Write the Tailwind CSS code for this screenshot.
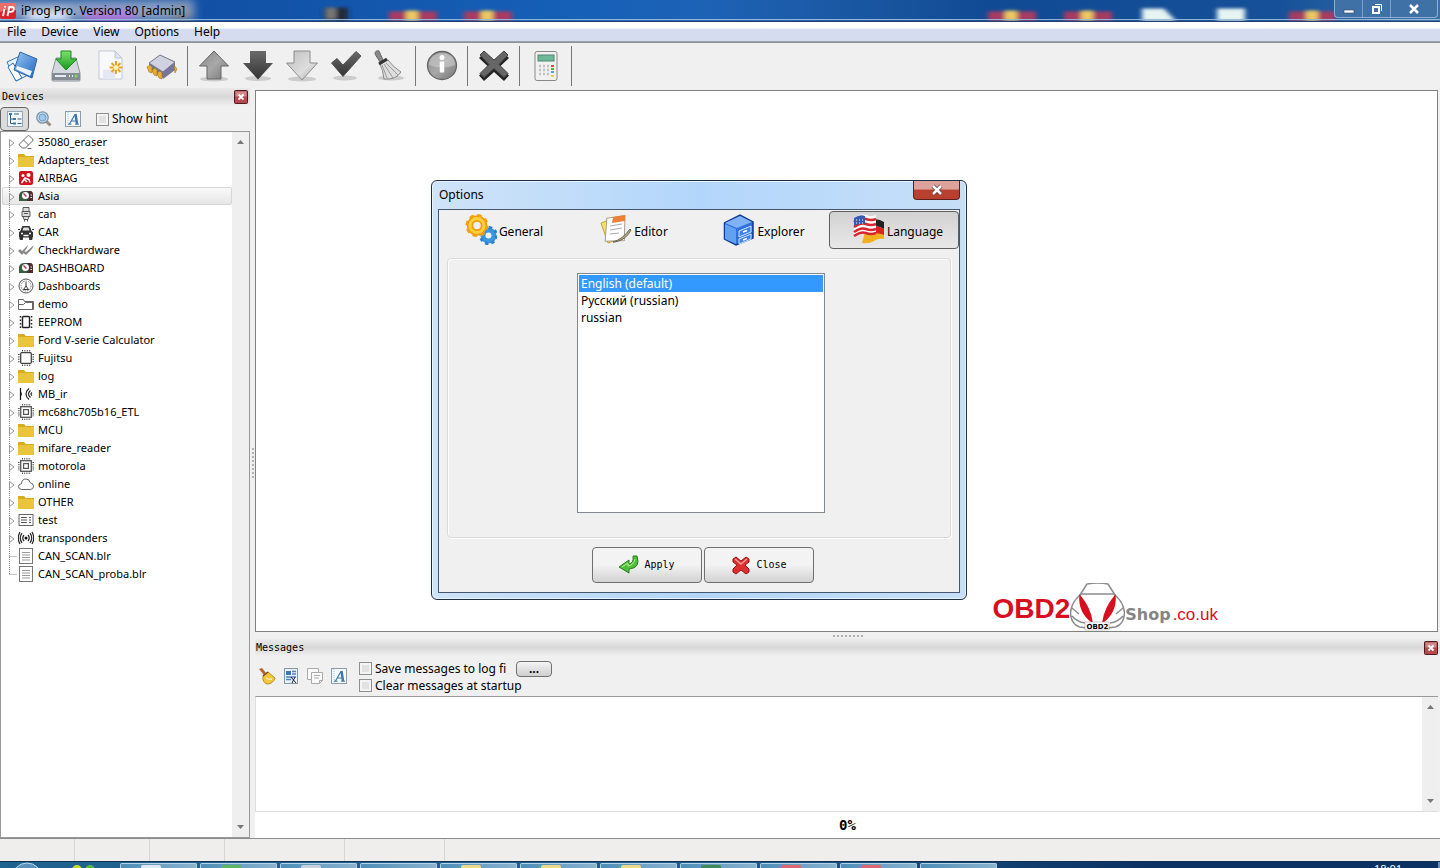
<!DOCTYPE html>
<html lang="en">
<head>
  <meta charset="UTF-8" />
  <meta name="viewport" content="width=device-width, initial-scale=1.0"/>
  <title>iProg Pro. Version 80 [admin]</title>
  <script src="https://cdn.jsdelivr.net/npm/@tailwindcss/browser@4"></script>
</head>
<body class="relative h-screen flex flex-col overflow-hidden bg-[#f0f0f0] text-black text-xs font-['Noto_Sans','Open_Sans',sans-serif]">

  <!-- Icon sprites -->
  <svg width="0" height="0" class="absolute" aria-hidden="true">
    <defs>
      <linearGradient id="gGray" x1="0" y1="0" x2="1" y2="1"><stop offset="0" stop-color="#8a8a8a"/><stop offset=".5" stop-color="#a8a8a8"/><stop offset="1" stop-color="#777"/></linearGradient>
      <linearGradient id="gDark" x1="0" y1="0" x2="0" y2="1"><stop offset="0" stop-color="#6a6a6a"/><stop offset="1" stop-color="#333"/></linearGradient>
      <linearGradient id="gLight" x1="0" y1="0" x2="1" y2="1"><stop offset="0" stop-color="#bcbcbc"/><stop offset=".6" stop-color="#dedede"/><stop offset="1" stop-color="#aaa"/></linearGradient>
      <linearGradient id="gBlue" x1="0" y1="0" x2="1" y2="1"><stop offset="0" stop-color="#9cc8f5"/><stop offset="1" stop-color="#1d63bd"/></linearGradient>
      <linearGradient id="gGreen" x1="0" y1="0" x2="0" y2="1"><stop offset="0" stop-color="#7fe070"/><stop offset="1" stop-color="#159a1c"/></linearGradient>
    </defs>
    <symbol id="i-eraser" viewBox="0 0 16 16"><path d="M1.500 10 9.500 2q1-1 2 0l3 3q1 1 0 2l-7 7h-3L1.500 11.500q-.6-.7 0-1.500zM5.500 6l5 5M9.500 14.500h4" fill="none" stroke="#666"/></symbol>
    <symbol id="i-folder" viewBox="0 0 16 16"><path d="M0 2h6l1.500 2H16v11H0z" fill="#eac43a"/><path d="M0 2h6l1.500 2H16v1H0z" fill="#d9ab1d"/></symbol>
    <symbol id="i-airbag" viewBox="0 0 16 16"><rect x="1" y="1" width="14" height="14" rx="2" fill="#d4141c"/><circle cx="10.500" cy="5" r="2" fill="#fff"/><circle cx="5" cy="5.500" r="1.500" fill="#fff"/><path d="M3.500 13 7 8l4 1.500 1 3M6 9l3 3" stroke="#fff" stroke-width="1.500" fill="none"/></symbol>
    <symbol id="i-dash" viewBox="0 0 16 16"><path d="M1 13V7q1-4 5-4h7q2 1 2 4v6z" fill="#3c5c42"/><path d="M9 3h4q2 1 2 4v6H9z" fill="#4a2d30"/><circle cx="7.500" cy="7.500" r="3.500" fill="#fff"/><path d="m5.500 5.500 3 3" stroke="#b03a5a" stroke-width="1.500"/><path d="M12.500 7h1.500M12.500 9.500h1.500" stroke="#eee"/></symbol>
    <symbol id="i-can" viewBox="0 0 16 16"><path d="M5 1.500h6v4H5zM4 5.500h8v5H4zM5 10.500h6l-1 3H6zM6.500 13.500v2M9.500 13.500v2M6 7.500h4" fill="#ddd" stroke="#555"/></symbol>
    <symbol id="i-car" viewBox="0 0 16 16"><path d="m3 7 1.500-4.500h7L13 7l1.500 1v5h-13V8zM2 13v2.500h2.500V13M11.500 13v2.500H14V13" fill="#333" stroke="#333"/><path d="m4.500 6.500 1-3h5l1 3z" fill="#ddd"/><path d="M3 9.500h2M11 9.500h2M5.500 11.500h5" stroke="#fff" stroke-width="1.300"/><path d="M0 5.500h2M14 5.500h2" stroke="#333"/></symbol>
    <symbol id="i-checks" viewBox="0 0 16 16"><path d="m0 9 2-2 2 2 6-6-1 3-5 7zM4 10l2-1 2 1 8-7-2 4-6 6z" fill="#8a8a8a"/></symbol>
    <symbol id="i-gauge" viewBox="0 0 16 16"><circle cx="8" cy="8" r="7" fill="none" stroke="#555"/><circle cx="8" cy="8" r="5" fill="none" stroke="#777" stroke-dasharray="1.500 1"/><path d="M8 4v4M5.500 11.500 8 8l2.500 3.500z" fill="none" stroke="#333"/></symbol>
    <symbol id="i-demo" viewBox="0 0 16 16"><path d="M.5 13.500v-10h5l1 2h9v8zM.5 8.500h5l2-2h8M14.500 5v9" fill="none" stroke="#666"/></symbol>
    <symbol id="i-eeprom" viewBox="0 0 16 16"><rect x="4.500" y="2.500" width="7" height="11" rx="1" fill="#fff" stroke="#222" stroke-width="1.400"/><path d="M2.500 2v12M13.500 2v12" stroke="#222" stroke-width="1.500" stroke-dasharray="1.500 2"/></symbol>
    <symbol id="i-chip" viewBox="0 0 16 16"><rect x="2.700" y="2.700" width="10.600" height="10.600" rx="1" fill="#fff" stroke="#444" stroke-width="1.300"/><path d="M4 .8h9M4 15.200h9M.8 4v9M15.200 4v9" stroke="#444" stroke-width="1.600" stroke-dasharray="1 1.400"/></symbol>
    <symbol id="i-cpu" viewBox="0 0 16 16"><rect x="2.700" y="2.700" width="10.600" height="10.600" fill="#fff" stroke="#555" stroke-width="1.300"/><rect x="5.600" y="5.600" width="4.800" height="4.800" fill="none" stroke="#555" stroke-width="1.200"/><path d="M4 .8h9M4 15.200h9M.8 4v9M15.200 4v9" stroke="#555" stroke-width="1.600" stroke-dasharray="1 1.200"/></symbol>
    <symbol id="i-ir" viewBox="0 0 16 16"><path d="M2.500 2v12" stroke="#111" stroke-width="1.200"/><path d="M3 6.500v3" stroke="#111" stroke-width="1.500"/><path d="M11 2.500q-6 5.500 0 11M12.500 4.500q-4 3.500 0 7M14 6.500q-2 1.500 0 3" fill="none" stroke="#222" stroke-width="1.200"/></symbol>
    <symbol id="i-cloud" viewBox="0 0 16 16"><path d="M3.500 13.500q-3-.3-3-3 0-2.500 3-2.800.3-4.700 4.500-4.700 3.500 0 4.300 3.800 3.200.4 3.200 3.400 0 3-3 3.300z" fill="#fff" stroke="#666"/></symbol>
    <symbol id="i-test" viewBox="0 0 16 16"><rect x="1" y="2.500" width="14" height="11" fill="#fff" stroke="#666"/><path d="M3 5.500h6M3 8h6M3 10.500h6M11 5.500h2M11 8h2M11 10.500h2" stroke="#555"/></symbol>
    <symbol id="i-radio" viewBox="0 0 16 16"><circle cx="8" cy="8" r="1.500" fill="#111"/><path d="M6 5q-2.500 3 0 6M10 5q2.500 3 0 6M4 3.200q-3.500 4.800 0 9.600M12 3.200q3.500 4.800 0 9.600M2 2q-3.500 6 0 12M14 2q3.500 6 0 12" fill="none" stroke="#222" stroke-width="1.200"/></symbol>
    <symbol id="i-file" viewBox="0 0 16 16"><rect x="1.500" y=".5" width="13" height="15" fill="#fff" stroke="#777"/><path d="M4 4.500h8M4 7h8M4 9.500h8M4 12h8" stroke="#999"/></symbol>
    <symbol id="i-letter" viewBox="0 0 16 16"><rect x=".5" y=".5" width="15" height="15" fill="#f6fafd" stroke="#8d9dac"/><path d="M3 1v14" stroke="#a9bccd" stroke-dasharray="1 1"/><path d="m4.500 13 5.500-9.500" fill="none" stroke="#3f74a8" stroke-width="1.200"/><path d="m10.500 3 1.500 10" fill="none" stroke="#3f74a8" stroke-width="2.400"/><path d="M6.500 10h5M3 13.200h3.500M10 13.200h4" stroke="#3f74a8"/></symbol>
    <symbol id="i-x" viewBox="0 0 14 14"><rect x=".5" y=".5" width="13" height="13" rx="1" fill="#b5494e" stroke="#501a20"/><rect x="1.500" y="1.500" width="11" height="5" fill="#cf8a8c"/><path d="m4.500 4.500 5 5m0-5-5 5" stroke="#fff" stroke-width="1.800"/></symbol>
  </svg>

  <!-- Title bar -->
  <header class="relative flex h-[22px] shrink-0 items-center justify-between overflow-hidden border-b border-[#24406e] bg-linear-to-r from-[#0f479a] via-[#1660b8] via-40% to-[#3a70a8]">
    <svg class="absolute inset-0 h-full w-full" viewBox="0 0 1440 22" preserveAspectRatio="none" aria-hidden="true">
      <defs>
        <filter id="soft" x="-20%" y="-60%" width="140%" height="220%"><feGaussianBlur stdDeviation="2.500 1.500"/></filter>
        <filter id="softer" x="-20%" y="-80%" width="140%" height="260%"><feGaussianBlur stdDeviation="5"/></filter>
        <linearGradient id="shade"><stop offset="0" stop-color="#114a94" stop-opacity="0"/><stop offset=".4" stop-color="#114a94"/><stop offset=".8" stop-color="#155098"/><stop offset="1" stop-color="#155098" stop-opacity="0"/></linearGradient>
      </defs>
      <rect x="700" width="720" height="22" fill="url(#shade)"/>
      <g filter="url(#softer)"><rect x="-10" y="0" width="204" height="22" fill="#88a0c4"/><rect x="28" y="12" width="40" height="12" fill="#e8f0ff"/><rect x="85" y="12" width="50" height="12" fill="#b877dd"/><rect x="172" y="8" width="18" height="14" fill="#8f8a90"/></g>
      <g filter="url(#soft)">
        <rect x="324" y="8" width="24" height="14" fill="#232a3a"/><rect x="326" y="8" width="10" height="12" fill="#777"/>
        <g fill="#a83a62"><rect x="389" y="12" width="48" height="10"/><rect x="464" y="12" width="48" height="10"/><rect x="988" y="12" width="48" height="10"/><rect x="1064" y="12" width="48" height="10"/><rect x="1289" y="12" width="46" height="10"/></g>
        <g fill="#ecc962"><rect x="406" y="11" width="12" height="11"/><rect x="481" y="11" width="12" height="11"/><rect x="1005" y="11" width="12" height="11"/><rect x="1081" y="11" width="12" height="11"/><rect x="1306" y="11" width="12" height="11"/></g>
      </g>
      <path d="M1142 9h22l12 13h-34zM1217 9h28v13h-28z" fill="#e6f4f2" filter="url(#soft)"/>
      <path d="M0 20.500h1440" stroke="#9dbde0"/>
    </svg>
    <div class="relative flex items-center gap-[5px]">
      <svg class="h-4 w-4" viewBox="0 0 16 16" aria-hidden="true"><rect width="16" height="16" rx="2" fill="#d8232b"/><path d="M0 0h16v7Q8 5 0 9z" fill="#ee6d66"/><path d="m4.500 6-1.500 7M5.200 3l-.3 1.500M7.500 13 9.300 4h3q2 .3 1.500 2.500-.6 2.300-3 2.300H9" fill="none" stroke="#fff" stroke-width="1.800"/></svg>
      <h1>iProg Pro. Version 80 [admin]</h1>
    </div>
    <div class="relative mr-[2px] flex h-[18px] self-start overflow-hidden rounded-b border border-t-0 border-[#8fb0d2] bg-[#3f70a6]">
      <button aria-label="Minimize" class="flex w-7 items-center justify-center border-r border-[#7fa2c8]"><svg class="h-3 w-3" viewBox="0 0 12 12"><rect x="1" y="7" width="10" height="3" fill="#fff" stroke="#31486a" stroke-width=".6"/></svg></button>
      <button aria-label="Restore" class="flex w-7 items-center justify-center border-r border-[#7fa2c8]"><svg class="h-3 w-3" viewBox="0 0 12 12" fill="none" stroke="#fff"><path d="M4 1.500h6.500V8"/><rect x="2" y="4" width="6" height="6" stroke-width="2"/></svg></button>
      <button aria-label="Close" class="flex w-[46px] items-center justify-center"><svg class="h-3 w-3" viewBox="0 0 12 12"><path d="m2 2 8 8m0-8-8 8" stroke="#fff" stroke-width="2.500"/></svg></button>
    </div>
  </header>

  <!-- Menu bar -->
  <nav class="flex h-5 shrink-0 items-center gap-[15px] border-b border-[#9a9fb4] bg-linear-to-b from-white from-30% to-[#d5dcf0] to-40% px-[7px]">
    <a href="#">File</a>
    <a href="#">Device</a>
    <a href="#">View</a>
    <a href="#">Options</a>
    <a href="#">Help</a>
  </nav>

  <!-- Toolbar -->
  <div class="flex h-[46px] shrink-0 items-center border-t border-[#8f8f96] bg-[#f0f0f0]">
    <button aria-label="Open" class="flex w-11 justify-center"><svg class="h-8 w-8" viewBox="0 0 32 32"><path d="M1 12 14 6l10 18-14 7z" fill="#e9f3fc" stroke="#3775bb"/><path d="m2 17 5-4 9 15-6 3z" fill="#fff" stroke="#2b6cb5"/><path d="M14 2 31 9l-5 19L8 20z" fill="url(#gBlue)" stroke="#2a66ad"/><path d="m11 16 15 5-2 5-14-7z" fill="#fff" opacity=".9"/></svg></button>
    <button aria-label="Save" class="flex w-11 justify-center"><svg class="h-8 w-8" viewBox="0 0 32 32"><path d="M6 8h20l4 15v7q0 1-1 1H3q-1 0-1-1v-7z" fill="#d4d9de" stroke="#8b9299"/><path d="M2 23h28v7H2z" fill="#858c94"/><path d="M5 26h11M19 26h1M22 26h1" stroke="#e8edf2" stroke-width="2"/><circle cx="26" cy="26" r="1.500" fill="#7be05c"/><path d="M11 1h10v8h6L16 20 6 9h5z" fill="url(#gGreen)" stroke="#188a1c"/></svg></button>
    <button aria-label="New" class="flex w-11 justify-center"><svg class="h-8 w-8" viewBox="0 0 32 32"><path d="M5 1h16l7 7v21H5z" fill="#f8f9fd" stroke="#c3c8d8"/><path d="M21 1v7h7z" fill="#dfe3ee" stroke="#c3c8d8"/><path d="M9 20h12v9H9z" fill="#e4e8f4"/><path d="M22 11v13M15.500 17.500h13M17.500 13l9 9M26.500 13l-9 9" stroke="#e9a520" stroke-width="2"/><circle cx="22" cy="17.500" r="2.500" fill="#fff0b5"/></svg></button>
    <div class="ml-[3px] mr-1 h-10 w-px bg-[#777]"></div>
    <button aria-label="Chip" class="flex w-11 justify-center"><svg class="h-8 w-8" viewBox="0 0 32 32"><path d="M3 14 14 5l15 7v7L17 28 3 19z" fill="#77788a"/><path d="M3 13 14 5l15 7-12 10z" fill="#d0d2e0" stroke="#777a8c"/><path d="m17 22 12-9v7l-12 9z" fill="#77759a"/><path d="m1 17 3-2 2 2v6l-3-1zM6 20l3-2 2 2v6l-3-1zM11 23l3-2 2 2v6l-3-1zM28 15l3 4-2 4z" fill="#e9ae30" stroke="#a2731a" stroke-width=".6"/></svg></button>
    <div class="ml-[3px] mr-1 h-10 w-px bg-[#777]"></div>
    <button aria-label="Up" class="flex w-11 justify-center"><svg class="h-8 w-8" viewBox="0 0 32 32"><ellipse cx="16" cy="29" rx="14" ry="2.500" fill="#ccc"/><path d="m16 1 14.500 15H23v13H9V16H1.500z" fill="url(#gGray)" stroke="#666"/></svg></button>
    <button aria-label="Down" class="flex w-11 justify-center"><svg class="h-8 w-8" viewBox="0 0 32 32"><ellipse cx="16" cy="28.500" rx="13" ry="2.500" fill="#ccc"/><path d="M8 1h16v12h7L16 29.500 1 13h7z" fill="url(#gDark)"/></svg></button>
    <button aria-label="Verify read" class="flex w-11 justify-center"><svg class="h-8 w-8" viewBox="0 0 32 32"><ellipse cx="16" cy="29" rx="14" ry="2.500" fill="#ccc"/><path d="M8 1h16v12h7.500L16 30 .5 13H8z" fill="url(#gLight)" stroke="#8c8c8c"/></svg></button>
    <button aria-label="Verify" class="flex w-11 justify-center"><svg class="h-8 w-8" viewBox="0 0 32 32"><ellipse cx="15" cy="28" rx="12" ry="2.500" fill="#ccc"/><path d="m1.500 13 5.500-4.500 6 6.500L26 1.500l5 4.500-18 20.500z" fill="url(#gDark)" stroke="#555"/></svg></button>
    <button aria-label="Erase" class="flex w-11 justify-center"><svg class="h-8 w-8" viewBox="0 0 32 32"><ellipse cx="17" cy="28" rx="13" ry="2.500" fill="#ccc"/><path d="M1 4q0-4 4-3l4 9-3 2z" fill="#8a8a8a" stroke="#666"/><path d="m6 14 8-4q5 7 13 12-5 8-17 7-1-9-4-15z" fill="#dedede" stroke="#888"/><path d="m8 15 5 13M10 14l9 14M12 13l12 12" stroke="#999"/><path d="m5 14 8-5" stroke="#333" stroke-width="3"/></svg></button>
    <div class="ml-[3px] mr-1 h-10 w-px bg-[#777]"></div>
    <button aria-label="Info" class="flex w-11 justify-center"><svg class="h-8 w-8" viewBox="0 0 32 32"><ellipse cx="16" cy="15.500" rx="14.500" ry="14" fill="url(#gGray)" stroke="#666" stroke-width="1.300"/><path d="M3 15a13 12 0 0 1 26 0q-13 5-26 0z" fill="#ccc" opacity=".6"/><circle cx="16" cy="7.500" r="2.500" fill="#fff"/><path d="M16 11.500v11" stroke="#fff" stroke-width="4.500"/></svg></button>
    <div class="ml-[3px] mr-1 h-10 w-px bg-[#777]"></div>
    <button aria-label="Stop" class="flex w-11 justify-center"><svg class="h-8 w-8" viewBox="0 0 32 32"><path d="m6 3 10 9L26 3l5 5-9 8.500 9 9-5 5.500-10-9-10 9-5-5.500 9-9L1 8z" fill="#242424"/><path d="m6 1 10 9 10-9 4 4-9 9.500 9 9-4 4-10-9-10 9-4-4 9-9L2 5z" fill="#666" stroke="#444"/></svg></button>
    <div class="ml-[3px] mr-1 h-10 w-px bg-[#777]"></div>
    <button aria-label="Calculator" class="flex w-11 justify-center"><svg class="h-8 w-8" viewBox="0 0 32 32"><rect x="5" y="1.500" width="22" height="29" rx="2" fill="#f1f1f1" stroke="#888"/><rect x="8" y="5" width="16" height="6" fill="#6cb896" stroke="#548a74"/><path d="M9 16h2M13 16h2M17 16h2M9 20h2M13 20h2M17 20h2M9 24h2M13 24h2M17 24h2" stroke="#c2c2c2" stroke-width="2.500"/><path d="M21 16h3" stroke="#d44" stroke-width="2"/><path d="M21 19h3" stroke="#4b4" stroke-width="2"/><path d="M21 22h3" stroke="#4ad" stroke-width="2"/><path d="M21 26h3" stroke="#ec4" stroke-width="2"/></svg></button>
    <div class="ml-[3px] mr-1 h-10 w-px bg-[#777]"></div>
  </div>

  <main class="flex min-h-0 flex-1">
    <!-- Devices panel -->
    <aside class="flex w-[250px] shrink-0 flex-col">
      <div class="flex h-[18px] items-center justify-between bg-linear-to-b from-[#e9e9e9] via-[#d8d8d8] to-[#f0f0f0] pl-[2px] pr-[2px]">
        <h2 class="text-[10px] font-['DejaVu_Sans_Mono','Liberation_Mono',monospace]">Devices</h2>
        <button aria-label="Close devices panel"><svg class="h-[14px] w-[14px]"><use href="#i-x"/></svg></button>
      </div>
      <div class="flex h-[25px] items-center">
        <button aria-label="Tree" class="flex h-6 w-[29px] items-center justify-center rounded-sm border border-[#666] bg-[#dcdcdc]"><svg class="h-4 w-4" viewBox="0 0 16 16"><rect x=".5" y=".5" width="15" height="15" fill="#f2f7fb" stroke="#93a8ba"/><path d="M3.500 4v8.500H6M3.500 8H6" fill="none" stroke="#345f86"/><path d="M2 2h3v2H2zM6 7h3v2H6zM6 11.500h3v2H6z" fill="#3e77ad"/><path d="M7 3h5M10.500 8h4M10.500 12.500h4" stroke="#345f86"/></svg></button>
        <button aria-label="Search" class="flex w-[29px] justify-center"><svg class="h-4 w-4" viewBox="0 0 16 16"><path d="m10.500 10.500 4 4" stroke="#9a8f86" stroke-width="3"/><circle cx="6.500" cy="6.500" r="5.700" fill="#c6def3" stroke="#7f93a8" stroke-width="1.300"/><circle cx="6.500" cy="6.500" r="3.500" fill="#a3c8ea" stroke="#6f9ac4"/></svg></button>
        <button aria-label="Font" class="flex w-[29px] justify-center"><svg class="h-4 w-4"><use href="#i-letter"/></svg></button>
        <label class="ml-[9px] flex items-center gap-[3px] pt-px"><input type="checkbox" class="h-[13px] w-[13px] appearance-none border border-[#8e8f8f] bg-[#e2e2e2] shadow-[inset_0_0_0_2px_#f4f4f4]">Show hint</label>
      </div>
      <div class="flex min-h-0 flex-1 border border-[#999] bg-white">
        <ul id="deviceTree" role="tree" class="min-w-0 flex-1 pl-px pt-px text-[11px]"></ul>
        <div class="flex w-[17px] flex-col items-center justify-between bg-[#efefef] py-2 text-[#777]">
          <svg class="h-1 w-[7px]" viewBox="0 0 7 4"><path d="M0 4 3.500 0 7 4z" fill="currentColor"/></svg>
          <svg class="h-1 w-[7px]" viewBox="0 0 7 4"><path d="M0 0h7L3.500 4z" fill="currentColor"/></svg>
        </div>
      </div>
    </aside>

    <div class="flex w-[5px] shrink-0 flex-col items-center justify-center"><div class="h-[30px] border-l-2 border-dotted border-[#b0b0b0]"></div></div>

    <section class="flex min-w-0 flex-1 flex-col pt-[2px]">
      <!-- Work area -->
      <div class="relative mr-[2px] min-h-0 flex-1 border border-[#808080] bg-white">
        <div class="absolute bottom-0 right-[219px] flex items-center whitespace-nowrap">
          <span class="mt-1 font-['Liberation_Sans',sans-serif] text-[28px] font-bold leading-8 text-[#d80f1e]">OBD2</span>
          <svg class="h-12 w-[55px]" viewBox="0 0 55 48" fill="none" stroke="#8c8c8c" stroke-width="1.500" aria-hidden="true">
            <path d="M10 12 17 1q11-2 21 0l7 11q9 8 9.500 18-.5 11-9 14-18 3-36 0-8.500-3-9-14Q1 20 10 12zM11 11h33M2 25l7 6M53 25l-7 6M2 33q5 6 13 7M53 33q-5 6-13 7"/>
            <path d="M10 13q-1 16 12 26-2-14-12-26zM45 13q1 16-12 26 2-14 12-26z" fill="#d80f1e" stroke="#d80f1e"/>
            <rect x="15" y="39" width="24" height="8" fill="#fff" stroke="#999" stroke-width=".5"/>
            <text x="27.500" y="46" text-anchor="middle" font-family="DejaVu Sans" font-size="7" font-weight="bold" fill="#000" stroke="none">OBD2</text>
          </svg>
          <span class="mt-4 font-['DejaVu_Sans',sans-serif] text-base font-bold text-[#858585]">Shop</span>
          <span class="ml-[2px] mt-4 font-['Liberation_Sans',sans-serif] text-[17px] text-[#d80f1e]">.co.uk</span>
        </div>
      </div>

      <div class="flex h-[7px] shrink-0 items-center justify-center"><div class="w-[30px] border-t-2 border-dotted border-[#b0b0b0]"></div></div>

      <!-- Messages panel -->
      <div class="flex h-[17px] shrink-0 items-center justify-between bg-linear-to-b from-[#ececec] via-[#d8d8d8] to-[#f0f0f0] pl-px pr-[2px]">
        <h2 class="text-[10px] font-['DejaVu_Sans_Mono','Liberation_Mono',monospace]">Messages</h2>
        <button aria-label="Close messages panel"><svg class="h-[14px] w-[14px]"><use href="#i-x"/></svg></button>
      </div>
      <div class="flex h-10 shrink-0 items-center">
        <div class="flex w-[104px] shrink-0 items-center">
          <button aria-label="Clear" class="flex w-6 justify-center"><svg class="h-[18px] w-[18px]" viewBox="0 0 18 18"><path d="m1 2 3-1 4 5-2 2z" fill="#b7662a"/><path d="m5 9 5-4 7 6q-2 6-8 6-5-2-4-8z" fill="#f3c93c" stroke="#b98c1b"/><path d="m5 9 5-4" stroke="#7c4a1c" stroke-width="1.500"/><path d="M8 11q2 2 6 1" stroke="#fff" fill="none"/></svg></button>
          <button aria-label="Select all" class="flex w-6 justify-center"><svg class="h-4 w-4" viewBox="0 0 16 16"><rect x="1.500" y=".5" width="13" height="15" fill="#eaf2f9" stroke="#8797a8"/><path d="M3 3h5v4H3z" fill="#3d78b5"/><path d="M9 3.500h4M9 6h4M3 9h10M3 11.500h5" stroke="#4f83b8" stroke-width="1.500"/><path d="m8 9 5 6M12 9l-3 6" stroke="#222"/></svg></button>
          <button aria-label="Copy" class="flex w-6 justify-center"><svg class="h-4 w-4" viewBox="0 0 16 16" fill="#fafafa" stroke="#aaa"><path d="M.5.5h11v11H.500z"/><path d="M4.500 4.500h11v8l-3 3h-8zM15.500 12.500h-3v3M7 7.500h6M7 10h5"/></svg></button>
          <button aria-label="Font" class="flex w-6 justify-center"><svg class="h-4 w-4"><use href="#i-letter"/></svg></button>
        </div>
        <div class="flex flex-col pt-[2px]">
          <div class="flex h-[17px] items-center">
            <label class="flex w-[156px] items-center gap-[3px] overflow-hidden whitespace-nowrap"><input type="checkbox" class="h-[13px] w-[13px] shrink-0 appearance-none border border-[#8e8f8f] bg-[#e2e2e2] shadow-[inset_0_0_0_2px_#f4f4f4]">Save messages to log fi</label>
            <button aria-label="Browse" class="ml-px flex h-4 w-9 items-center justify-center rounded-sm border border-[#707070] bg-linear-to-b from-[#f4f4f4] to-[#cfcfcf] font-bold leading-3">...</button>
          </div>
          <label class="flex h-[17px] items-center gap-[3px]"><input type="checkbox" class="h-[13px] w-[13px] appearance-none border border-[#8e8f8f] bg-[#e2e2e2] shadow-[inset_0_0_0_2px_#f4f4f4]">Clear messages at startup</label>
        </div>
      </div>
      <div class="mr-[2px] flex h-[116px] shrink-0 border-y border-l border-t-[#999] border-b-[#dedede] border-l-[#dedede] bg-white">
        <textarea aria-label="Messages" class="min-w-0 flex-1 resize-none bg-white outline-none"></textarea>
        <div class="flex w-4 flex-col items-center justify-between bg-[#efefef] py-2 text-[#777]">
          <svg class="h-1 w-[7px]" viewBox="0 0 7 4"><path d="M0 4 3.500 0 7 4z" fill="currentColor"/></svg>
          <svg class="h-1 w-[7px]" viewBox="0 0 7 4"><path d="M0 0h7L3.500 4z" fill="currentColor"/></svg>
        </div>
      </div>
      <div role="progressbar" aria-label="Progress" aria-valuenow="0" class="flex h-[26px] shrink-0 items-center justify-center bg-white font-['DejaVu_Sans_Mono',monospace] text-sm font-bold">0%</div>
    </section>
  </main>

  <!-- Status bar -->
  <footer class="flex h-[23px] shrink-0 border-t border-[#8c8c8c] bg-[#f0eeed]">
    <div class="w-[75px] border-r border-[#d7d5d5]"></div>
    <div class="w-[75px] border-r border-[#d7d5d5]"></div>
    <div class="w-[75px] border-r border-[#d7d5d5]"></div>
    <div class="w-[120px] border-r border-[#d7d5d5]"></div>
    <div class="w-[100px] border-r border-[#d7d5d5]"></div>
  </footer>

  <!-- Taskbar, mostly below the screen edge -->
  <div class="flex h-[7px] shrink-0 overflow-hidden border-t border-[#12304f] bg-linear-to-r from-[#1f6390] via-[#1c5a8c] to-[#0c3263] to-80%">
    <div class="w-[120px] shrink-0">
      <svg class="h-[6px] w-[120px]" viewBox="0 0 120 6" aria-hidden="true"><circle cx="27" cy="16" r="15" fill="#5b93bd" stroke="#b9d8ee"/><circle cx="77" cy="8" r="5" fill="#c5dc2c"/><circle cx="90" cy="8" r="5" fill="#58b947"/></svg>
    </div>
    <div id="taskButtons" class="flex shrink-0 gap-[3px] pt-px"></div>
    <div class="min-w-0 flex-1"></div>
    <time class="mr-9 pt-px text-[11px] leading-3 text-white">18:01</time>
    <div class="w-[2px] bg-[#6a90b5]"></div>
  </div>

  <!-- Options dialog -->
  <div role="dialog" aria-labelledby="optionsTitle" class="absolute left-[431px] top-[180px] flex w-[536px] flex-col rounded-md border border-[#1d2f48] bg-linear-to-r from-[#cfe3f8] via-[#b2d6fb] to-[#c7dff8] px-[6px] pb-[6px] shadow-[inset_0_0_0_1px_#e8f4ff]">
    <div class="flex h-7 items-start justify-between">
      <h2 id="optionsTitle" class="pl-px pt-[6px]">Options</h2>
      <button aria-label="Close dialog" class="flex h-[19px] w-[47px] items-center justify-center rounded-b border border-t-0 border-[#5d2020] bg-linear-to-b from-[#dba39b] from-45% to-[#b9402f] to-50%"><svg class="h-3 w-3" viewBox="0 0 12 12"><path d="m2 2 8 8m0-8-8 8" stroke="#5b4040" stroke-width="4"/><path d="m2 2 8 8m0-8-8 8" stroke="#fff" stroke-width="2.500"/></svg></button>
    </div>
    <div class="flex flex-col border border-[#45576f] bg-[#f0f0f0] pb-[9px] pt-px">
      <div class="grid grid-cols-4">
        <button class="flex h-[38px] items-center justify-center gap-[2px]"><svg class="h-8 w-8" viewBox="0 0 32 32"><circle cx="23.500" cy="21.500" r="5.500" fill="none" stroke="#3b96de" stroke-width="5"/><circle cx="23.500" cy="21.500" r="8" fill="none" stroke="#2b83cf" stroke-width="3" stroke-dasharray="3.300 3"/><circle cx="12" cy="11.500" r="7" fill="none" stroke="#f29c0c" stroke-width="6.500"/><circle cx="12" cy="11.500" r="10" fill="none" stroke="#f0a012" stroke-width="3" stroke-dasharray="4.300 3.550"/><circle cx="12" cy="11.500" r="7" fill="none" stroke="#ffcf3c" stroke-width="3"/></svg><span class="mt-1">General</span></button>
        <button class="flex h-[38px] items-center justify-center gap-[2px]"><svg class="h-8 w-8" viewBox="0 0 32 32"><path d="m1 9 13-5 6 21-12 4z" fill="#f7e36a" stroke="#bba23c"/><path d="m6 5 18-4 1 25-19 2z" fill="#fff" stroke="#a99a88" transform="rotate(4 16 16)"/><path d="M13 3 25 1v6l-13 2z" fill="#ef8136"/><path d="m10 12 12-2M10 16l12-2M10 20l9-1" stroke="#aaa"/><path d="M13 28q10-3 17-13l1 1q-5 10-16 12z" fill="#bfa98a" stroke="#665"/></svg><span class="mt-1">Editor</span></button>
        <button class="flex h-[38px] items-center justify-center gap-[2px]"><svg class="h-8 w-8" viewBox="0 0 32 32"><path d="M1.500 9 17 1l13 7v16L13 31 1.500 25z" fill="#2f70dc" stroke="#123a90" stroke-width="1.500"/><path d="M2 9 17 2l12 6-15 6z" fill="#7fb2f7"/><path d="m2 10 11 5v15L2 25z" fill="#62a0f2"/><path d="m16 17 12-5v6l-12 5zM16 25l12-5v5l-12 5z" fill="#3f84e6" stroke="#cfe3ff"/><path d="m20 18 4-1.500M20 26l4-1.500" stroke="#fff" stroke-width="1.500"/></svg><span class="mt-1">Explorer</span></button>
        <button aria-pressed="true" class="flex h-[38px] items-center justify-center gap-[2px] rounded-sm border border-[#606060] bg-linear-to-b from-[#d2d2d2] to-[#e8e8e8] pl-2"><svg class="h-8 w-8" viewBox="0 0 32 32"><path d="M12 18q8-5 19 1v6q-6-1-10 2t-12 2z" fill="#f2b020"/><path d="M18 6q7-2 13 2v7q-6-4-13-2z" fill="#222"/><path d="M18 13q7-2 13 2v6q-6-3-13-1z" fill="#d8261f"/><path d="M1 4q7-5 12-3t10 0v17q-6 3-10 1t-12 4z" fill="#fff"/><path d="M1 8q7-5 12-3t10 0M1 13q7-5 12-3t10 0M1 18q7-5 12-3t10 0M1 22q7-5 12-3t10 0" stroke="#d9252f" stroke-width="2.500" fill="none"/><path d="M1 4q6-4 11-2v8q-5-1-11 2z" fill="#3958b0"/><path d="M3 6h7M3 9h7" stroke="#fff" stroke-dasharray="1 2"/></svg><span class="mt-1">Language</span></button>
      </div>
      <div class="mx-2 mt-[9px] flex h-[280px] justify-center rounded-sm border border-[#d9d9d9] pl-1 pt-[14px] shadow-[inset_1px_1px_0_#fff,1px_1px_0_#fff]">
        <select size="3" aria-label="Language" class="h-[240px] w-[248px] appearance-none overflow-hidden border border-[#828790] bg-white p-px outline-none">
          <option selected class="h-[17px] px-[2px] py-0 leading-4 checked:bg-[linear-gradient(#3399ff,#3399ff)] checked:text-white">English (default)</option>
          <option class="h-[17px] px-[2px] py-0 leading-4">Русский (russian)</option>
          <option class="h-[17px] px-[2px] py-0 leading-4">russian</option>
        </select>
      </div>
      <div class="mt-[9px] flex justify-center gap-[2px] pl-2 font-['DejaVu_Sans_Mono','Liberation_Mono',monospace] text-[10px]">
        <button class="flex h-9 w-[110px] items-center justify-center gap-[5px] rounded-sm border border-[#707070] bg-linear-to-b from-[#f3f3f3] from-50% to-[#d2d2d2]"><svg class="h-5 w-5" viewBox="0 0 20 20"><path d="m0 12 10-7v4q5-1 4-8h4q4 12-8 13v4z" fill="#4fbf3a" stroke="#27801c"/><path d="m3 12 6-4v3q6-1 7-7" stroke="#b4f09a" fill="none"/></svg>Apply</button>
        <button class="flex h-9 w-[110px] items-center justify-center gap-[5px] rounded-sm border border-[#707070] bg-linear-to-b from-[#f3f3f3] from-50% to-[#d2d2d2]"><svg class="h-5 w-5" viewBox="0 0 20 20"><path d="m2 4 3-2 5 4 5-4 3 2v3l-4 3 4 4v3l-3 2-5-4-5 4-3-2v-3l4-4-4-3z" fill="#dc2f30" stroke="#9b1114"/><path d="m4 4 6 5 6-5" stroke="#ff9c97" stroke-width="1.500" fill="none"/></svg>Close</button>
      </div>
    </div>
  </div>

  <script>
    const devices = [
      ["35080_eraser", "eraser"], ["Adapters_test", "folder"], ["AIRBAG", "airbag"], ["Asia", "dash"],
      ["can", "can"], ["CAR", "car"], ["CheckHardware", "checks"], ["DASHBOARD", "dash"],
      ["Dashboards", "gauge"], ["demo", "demo"], ["EEPROM", "eeprom"], ["Ford V-serie Calculator", "folder"],
      ["Fujitsu", "chip"], ["log", "folder"], ["MB_ir", "ir"], ["mc68hc705b16_ETL", "cpu"],
      ["MCU", "folder"], ["mifare_reader", "folder"], ["motorola", "cpu"], ["online", "cloud"],
      ["OTHER", "folder"], ["test", "test"], ["transponders", "radio"],
      ["CAN_SCAN.blr", "file"], ["CAN_SCAN_proba.blr", "file"],
    ];

    const arrow = '<path d="M2.500 6.500v7l4.500-3.500z" fill="#fff" stroke="#999"/>';
    const branch = '<path d="M2.500 9.500H10" stroke="#888" stroke-dasharray="1 1"/>';

    document.getElementById("deviceTree").innerHTML = devices.map(([name, icon], i) => {
      const last = i === devices.length - 1;
      const selected = name === "Asia" ? "border-[#d5d5d5] bg-linear-to-b from-[#fafafa] to-[#e6e6e6] rounded-xs" : "border-transparent";
      return `<li role="treeitem" class="flex h-[18px] items-center border pl-1 ${selected}">
        <svg class="h-[18px] w-[10px] shrink-0" viewBox="0 0 10 18"><path d="M2.500 ${i ? 0 : 8}V${last ? 10 : 18}" stroke="#888" stroke-dasharray="1 1"/>${icon === "file" ? branch : arrow}</svg>
        <svg class="ml-px h-4 w-4 shrink-0"><use href="#i-${icon}"/></svg>
        <span class="ml-1 whitespace-nowrap">${name}</span>
      </li>`;
    }).join("");

    // running programs: colour of the visible top of each icon
    const tasks = ["#dfe9f5", "#5cb85c", "#c5d3df", "none", "#ecd98a", "#ecd98a", "#ecd98a", "#3d8b57", "#e0686c", "#e0686c", "none"];
    document.getElementById("taskButtons").innerHTML = tasks.map((color) =>
      `<span class="block h-[6px] w-[77px] rounded-t-xs border border-b-0 border-[#b5d3e6] bg-linear-to-r from-[#4d8db6] to-[#8ab4cf]"><svg class="ml-5 h-[5px] w-6" viewBox="0 0 24 5"><rect y="1" width="20" height="8" rx="2" fill="${color}"/></svg></span>`
    ).join("");
  </script>
</body>
</html>
